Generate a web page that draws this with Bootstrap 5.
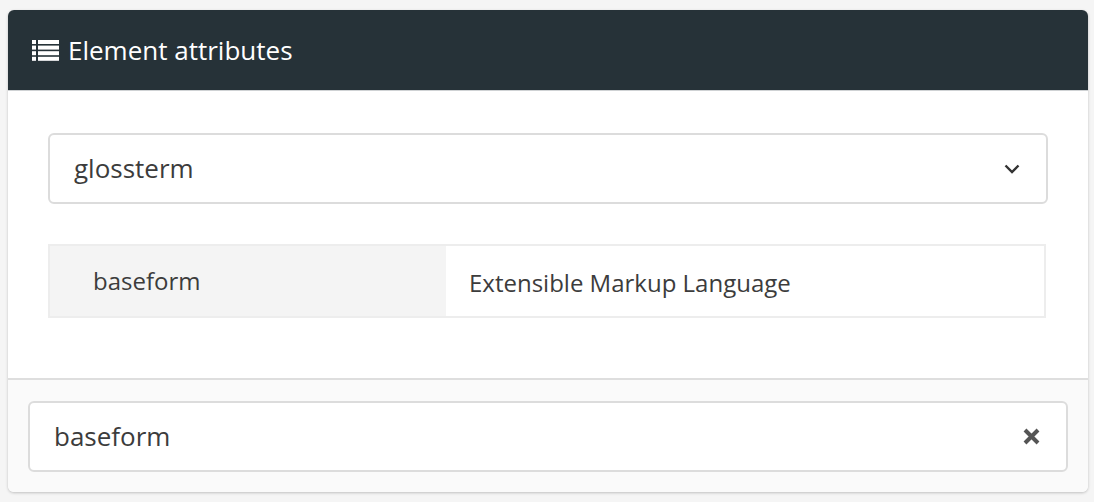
<!DOCTYPE html>
<html lang="en">
<head>
  <meta charset="UTF-8">
  <meta name="viewport" content="width=device-width, initial-scale=1.0">
  <title>Element attributes</title>
  <link href="https://cdn.jsdelivr.net/npm/bootstrap@5.3.2/dist/css/bootstrap.min.css" rel="stylesheet">
  <style>
    body {
      font-family: "Open Sans", sans-serif;
      background-color: #f5f5f5;
      color: #3c3c3c;
      padding: 10px 6px 10px 8px;
      height: 502px;
      overflow: hidden;
    }

    .attr-panel {
      height: 482px;
      border: 0;
      border-radius: 6px;
      background-color: #fff;
      box-shadow: 0 1px 3px rgba(0, 0, 0, .22);
      overflow: hidden;
    }

    .attr-header {
      height: 81px;
      padding: 0 24px;
      gap: 9px;
      background-color: #263238;
      color: #fff;
      font-size: 26px;
      border-bottom: 1px solid #cfd2d4;
    }

    .attr-body {
      height: 287px;
      padding: 42px 40px 0;
    }

    .attr-select,
    .attr-filter {
      height: 71px;
      padding: 0 26px 0 24px;
      background-color: #fff;
      border: 2px solid #dcdcdc;
      border-radius: 6px;
      font-size: 26px;
    }

    .attr-table {
      margin-top: 40px;
      margin-right: 2px;
      height: 74px;
      border: 2px solid #ededed;
      font-size: 24px;
    }

    .attr-name {
      width: 396px;
      padding-left: 43px;
      padding-bottom: 1px;
      background-color: #f4f4f4;
    }

    .attr-value {
      padding-left: 23px;
      padding-top: 4px;
    }

    .attr-footer {
      height: 114px;
      padding: 21px 20px 0;
      background-color: #fafafa;
      border-top: 2px solid #dedede;
    }
  </style>
</head>
<body>

  <div class="card attr-panel">
    <div class="attr-header d-flex align-items-center">
      <svg width="27" height="21" viewBox="0 0 27 21" fill="#fff" aria-hidden="true">
        <rect x="0" y="0" width="4" height="4"/><rect x="6" y="0" width="21" height="4"/>
        <rect x="0" y="5.6" width="4" height="4"/><rect x="6" y="5.6" width="21" height="4"/>
        <rect x="0" y="11.2" width="4" height="4"/><rect x="6" y="11.2" width="21" height="4"/>
        <rect x="0" y="16.8" width="4" height="4"/><rect x="6" y="16.8" width="21" height="4"/>
      </svg>
      <span>Element attributes</span>
    </div>

    <div class="attr-body">
      <div class="attr-select d-flex align-items-center justify-content-between">
        <span>glossterm</span>
        <svg width="16" height="10" viewBox="0 0 16 10" fill="none" stroke="#333" stroke-width="2.4" aria-hidden="true">
          <path d="M1.5 1.5 8 8l6.5-6.5"/>
        </svg>
      </div>
      <div class="attr-table d-flex">
        <div class="attr-name d-flex align-items-center">baseform</div>
        <div class="attr-value d-flex align-items-center flex-grow-1">Extensible Markup Language</div>
      </div>
    </div>

    <div class="attr-footer">
      <div class="attr-filter d-flex align-items-center justify-content-between">
        <span>baseform</span>
        <svg width="17" height="17" viewBox="0 0 17 17" fill="none" stroke="#555" stroke-width="4" aria-hidden="true">
          <path d="M2 2l13 13M15 2 2 15"/>
        </svg>
      </div>
    </div>
  </div>

  <script src="https://cdn.jsdelivr.net/npm/bootstrap@5.3.2/dist/js/bootstrap.bundle.min.js"></script>
</body>
</html>
